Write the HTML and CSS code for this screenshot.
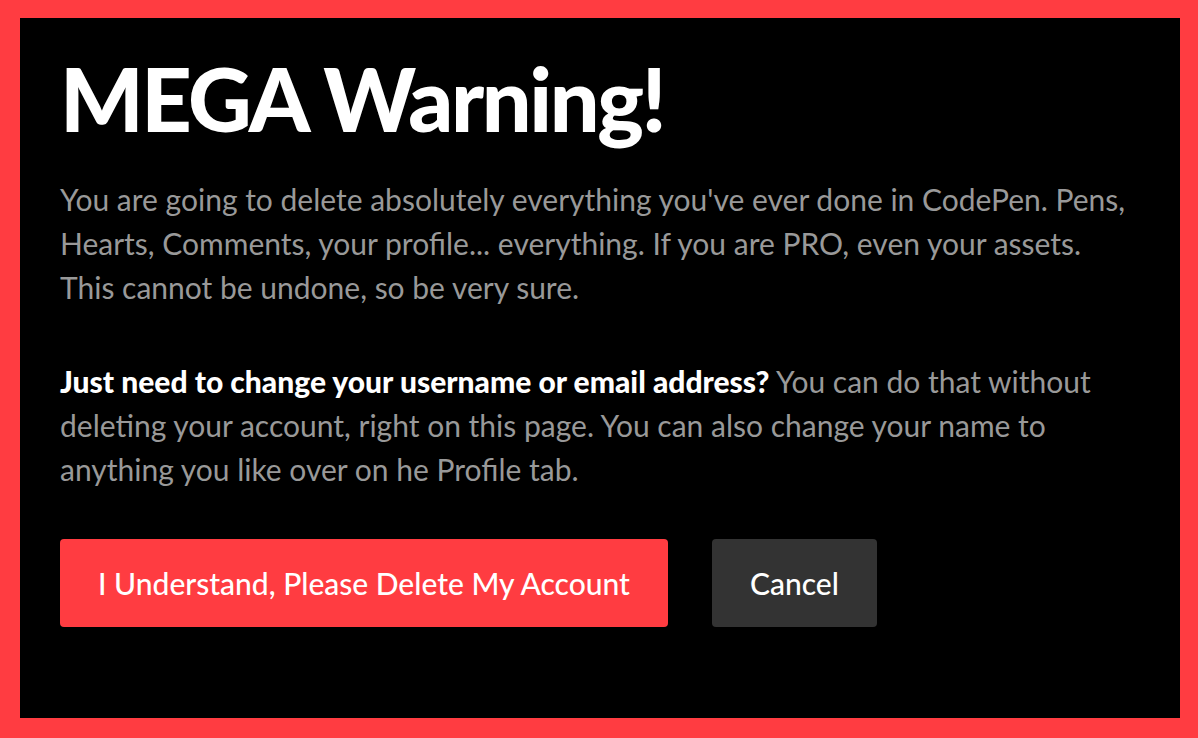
FILE: index.html
```html
<!DOCTYPE html>
<html>
<head>
<meta charset="utf-8">
<link rel="stylesheet" href="styles.css">
</head>
<body>
<div class="modal">
  <h1 class="title">MEGA Warning!</h1>
  <p class="text">You are going to delete absolutely everything you've ever done in CodePen. Pens, Hearts, Comments, your profile... everything. If you are PRO, even your assets. This cannot be undone, so be very sure.</p>
  <p class="text"><strong class="strong">Just need to change your username or email address?</strong> You can do that without deleting your account, right on this page. You can also change your name to anything you like over on he Profile tab.</p>
  <div class="actions">
    <button class="btn btn-danger">I Understand, Please Delete My Account</button>
    <button class="btn btn-cancel">Cancel</button>
  </div>
</div>
</body>
</html>
```

FILE: styles.css
```css
html, body {
  margin: 0;
  height: 100%;
}
body {
  background: #ff3c41;
  padding: 18px 18px 20px 20px;
  box-sizing: border-box;
  font-family: Lato, "Noto Sans", sans-serif;
}
.modal {
  background: #000;
  height: 100%;
  box-sizing: border-box;
  padding: 25px 40px 0 40px;
}
.title {
  margin: 0;
  color: #fff;
  font-family: Lato, sans-serif;
  font-weight: 900;
  font-size: 88px;
  line-height: 110px;
  letter-spacing: -2.4px;
}
.text {
  max-width: 1074px;
  margin: 24px 0 50px;
  color: #999;
  font-size: 30px;
  line-height: 44px;
}
.text + .text {
  margin-top: 0;
  margin-bottom: 48px;
}
.strong {
  color: #fff;
  font-weight: 900;
}
.actions {
  display: flex;
  gap: 44px;
}
.btn {
  border: 0;
  border-radius: 4px;
  height: 88px;
  padding: 0 38px;
  font-family: Lato, sans-serif;
  font-size: 30px;
  font-weight: 500;
  color: #fff;
}
.btn-danger {
  background: #ff3c41;
}
.btn-cancel {
  background: #333;
}
```
